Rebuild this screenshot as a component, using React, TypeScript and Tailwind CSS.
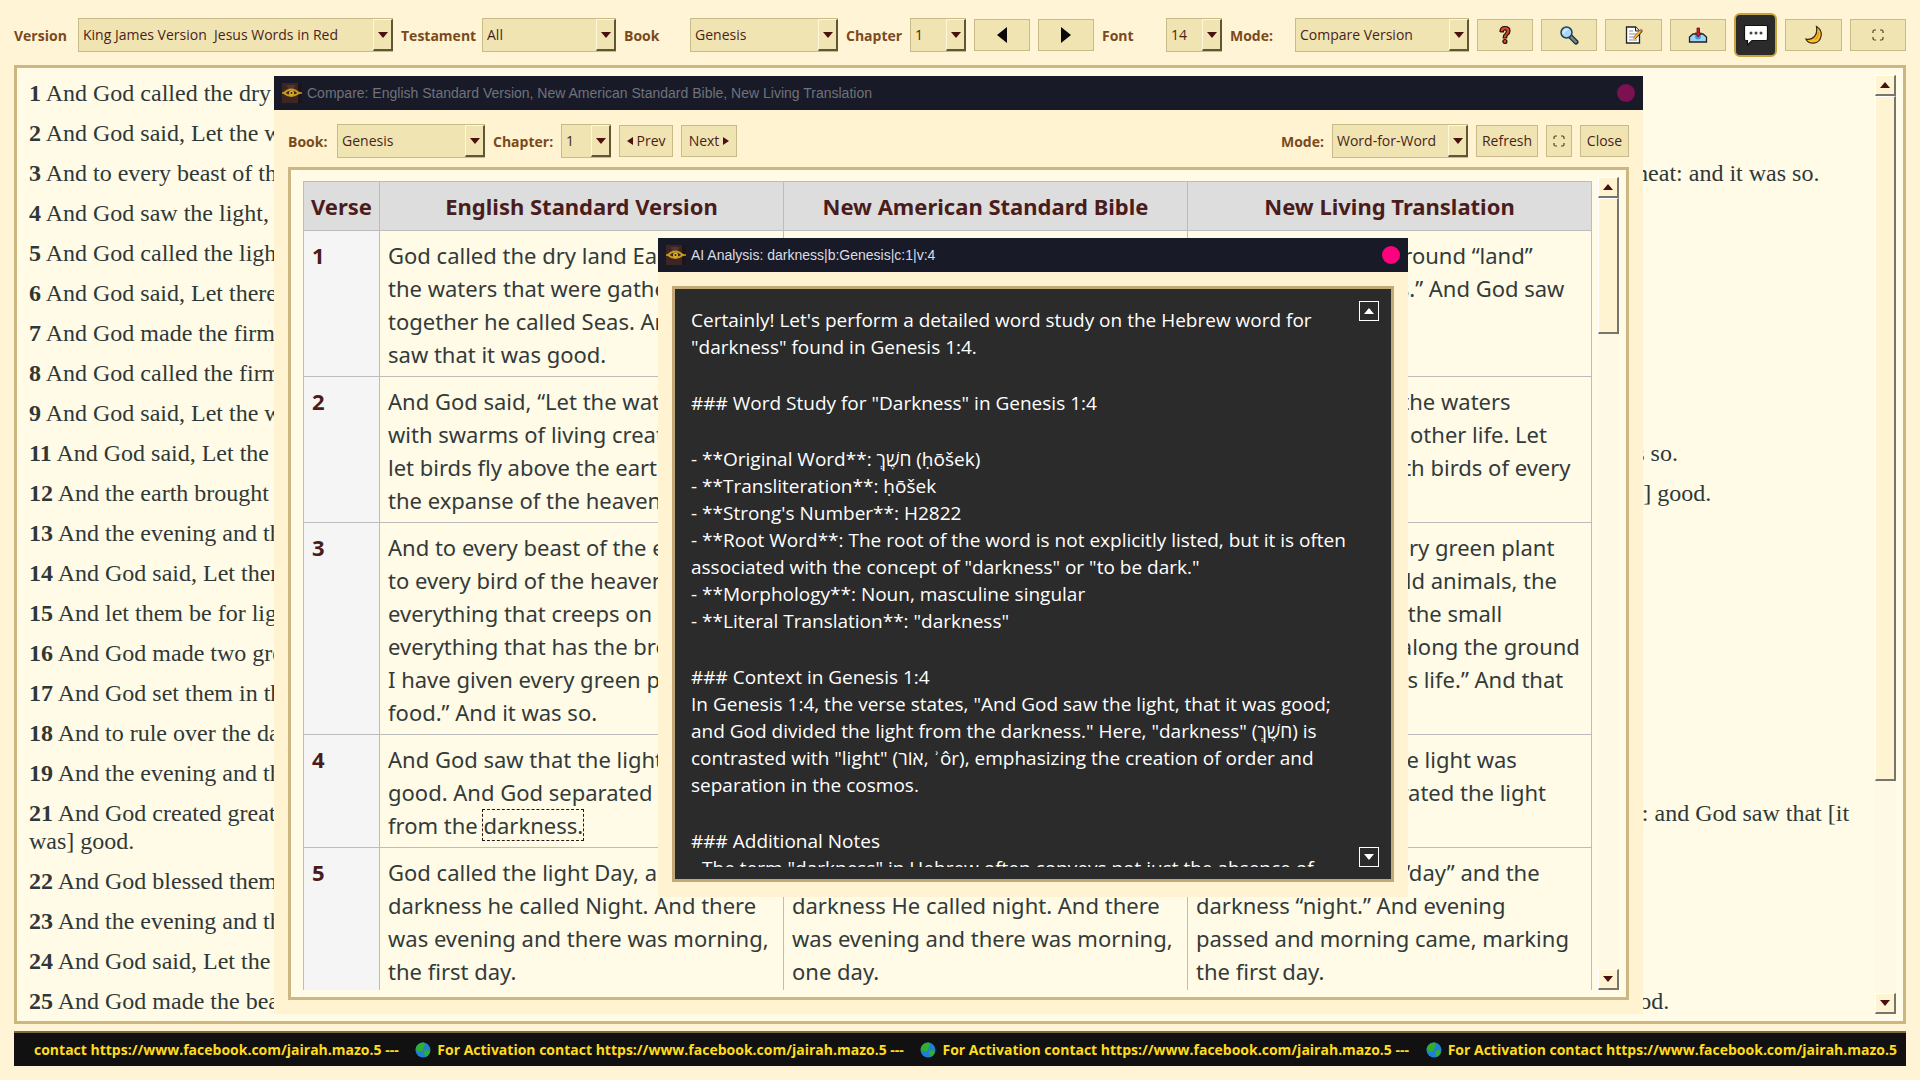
import React from "react";
import clsx from "clsx";

const verses = [
  [1, "And God called the dry [land] Earth; and the gathering together of the waters called he Seas: and God saw that [it was] good."],
  [2, "And God said, Let the waters bring forth abundantly the moving creature that hath life, and fowl [that] may fly above the earth in the open firmament."],
  [3, "And to every beast of the earth, and to every fowl of the air, and to every thing that creepeth upon the earth, wherein there is life, [I have given] every green herb for meat: and it was so."],
  [4, "And God saw the light, that [it was] good: and God divided the light from the darkness."],
  [5, "And God called the light Day, and the darkness he called Night. And the evening and the morning were the first day."],
  [6, "And God said, Let there be a firmament in the midst of the waters, and let it divide the waters from the waters."],
  [7, "And God made the firmament, and divided the waters which [were] under the firmament from the waters which [were] above the firmament: and it was so."],
  [8, "And God called the firmament Heaven. And the evening and the morning were the second day."],
  [9, "And God said, Let the waters under the heaven be gathered together unto one place, and let the dry [land] appear: and it was so."],
  [11, "And God said, Let the earth bring forth grass, the herb yielding seed, [and] the fruit tree yielding fruit after his kind, whose seed is in itself, upon the earth: and it was so."],
  [12, "And the earth brought forth grass, [and] herb yielding seed after his kind, and the tree yielding fruit, whose seed was in itself, after his kind: and God saw that [it was] good."],
  [13, "And the evening and the morning were the third day."],
  [14, "And God said, Let there be lights in the firmament of the heaven to divide the day from the night; and let them be for signs, and for seasons."],
  [15, "And let them be for lights in the firmament of the heaven to give light upon the earth: and it was so."],
  [16, "And God made two great lights; the greater light to rule the day, and the lesser light to rule the night: [he made] the stars also."],
  [17, "And God set them in the firmament of the heaven to give light upon the earth,"],
  [18, "And to rule over the day and over the night, and to divide the light from the darkness: and God saw that [it was] good."],
  [19, "And the evening and the morning were the fourth day."],
  [21, "And God created great whales and every living creature that moveth which the waters brought forth abundantly after their kind, and every winged fowl after his kind: and God saw that [it was] good."],
  [22, "And God blessed them, saying, Be fruitful, and multiply, and fill the waters in the seas, and let fowl multiply in the earth."],
  [23, "And the evening and the morning were the fifth day."],
  [24, "And God said, Let the earth bring forth the living creature after his kind, cattle, and creeping thing, and beast of the earth: and it was so."],
  [25, "And God made the beast of the earth after his kind and cattle after their kind and every thing that creepeth upon the earth after his kind; and God saw that [it was] good."],
] as const;

const compareRows: React.ReactNode[][] = [
  [
    "God called the dry land Earth, and\nthe waters that were gathered\ntogether he called Seas. And God\nsaw that it was good.",
    "And God called the dry land earth,\nand the gathering of the waters He\ncalled seas; and God saw that it\nwas good.",
    "God called the dry ground “land”\nand the waters “seas.” And God saw\nthat it was good.",
  ],
  [
    "And God said, “Let the waters swarm\nwith swarms of living creatures, and\nlet birds fly above the earth across\nthe expanse of the heavens.”",
    "Then God said, “Let the waters teem\nwith swarms of living creatures, and\nlet birds fly above the earth in the\nopen expanse of the heavens.”",
    "Then God said, “Let the waters\nswarm with fish and other life. Let\nthe skies be filled with birds of every\nkind.”",
  ],
  [
    "And to every beast of the earth and\nto every bird of the heavens and to\neverything that creeps on the earth,\neverything that has the breath of life,\nI have given every green plant for\nfood.” And it was so.",
    "and to every beast of the earth and\nto every bird of the sky and to\neverything that moves on the earth\nwhich has life, I have given every\ngreen plant for food”; and it was so.",
    "And I have given every green plant\nas food for all the wild animals, the\nbirds in the sky, and the small\nanimals that scurry along the ground\n—everything that has life.” And that\nis what happened.",
  ],
  [
    <>
      {"And God saw that the light was\ngood. And God separated the light\nfrom the "}
      <span className="outline-1 outline-dashed outline-[#2b1512]">darkness.</span>
    </>,
    "God saw that the light was good;\nand God separated the light from\nthe darkness.",
    "And God saw that the light was\ngood. Then he separated the light\nfrom the darkness.",
  ],
  [
    "God called the light Day, and the\ndarkness he called Night. And there\nwas evening and there was morning,\nthe first day.",
    "God called the light day, and the\ndarkness He called night. And there\nwas evening and there was morning,\none day.",
    "God called the light “day” and the\ndarkness “night.” And evening\npassed and morning came, marking\nthe first day.",
  ],
];

const analysis = [
  "Certainly! Let's perform a detailed word study on the Hebrew word for\n\"darkness\" found in Genesis 1:4.",
  "### Word Study for \"Darkness\" in Genesis 1:4",
  "- **Original Word**: חֹשֶׁךְ (ḥōšek)\n- **Transliteration**: ḥōšek\n- **Strong's Number**: H2822\n- **Root Word**: The root of the word is not explicitly listed, but it is often\nassociated with the concept of \"darkness\" or \"to be dark.\"\n- **Morphology**: Noun, masculine singular\n- **Literal Translation**: \"darkness\"",
  "### Context in Genesis 1:4\nIn Genesis 1:4, the verse states, \"And God saw the light, that it was good;\nand God divided the light from the darkness.\" Here, \"darkness\" (חֹשֶׁךְ) is\ncontrasted with \"light\" (אוֹר, ʾôr), emphasizing the creation of order and\nseparation in the cosmos.",
  "### Additional Notes\n- The term \"darkness\" in Hebrew often conveys not just the absence of",
];

function Select({ id, value, className }: { id: string; value: string; className?: string }) {
  return (
    <div className={clsx("relative h-[34px]", className)}>
      <select
        id={id}
        className="h-full w-full appearance-none border border-[#c9ba8a] bg-[#f0e4b2] pl-1 text-sm text-[#4a1f1a] outline-none"
      >
        <option>{value}</option>
      </select>
      <span className="pointer-events-none absolute inset-y-px right-0 flex w-5 items-center justify-center border-t border-r-2 border-b-2 border-l border-t-[#fff8dc] border-r-[#5f5634] border-b-[#5f5634] border-l-[#fff8dc]">
        <Triangle className="h-1.5 w-2.5 text-[#4a1010]" />
      </span>
    </div>
  );
}

function Triangle({ up, className }: { up?: boolean; className?: string }) {
  return (
    <svg viewBox="0 0 10 6" fill="currentColor" className={className}>
      <path d={up ? "M5 0l5 6H0z" : "M0 0h10L5 6z"} />
    </svg>
  );
}

function Label({ htmlFor, children, className }: { htmlFor: string; children: React.ReactNode; className?: string }) {
  return (
    <label htmlFor={htmlFor} className={clsx("shrink-0 pt-0.5 text-sm font-bold text-[#7a4a1c]", className)}>
      {children}
    </label>
  );
}

function Button({ label, className, children }: { label?: string; className?: string; children: React.ReactNode }) {
  return (
    <button
      aria-label={label}
      className={clsx(
        "flex h-8 shrink-0 items-center justify-center gap-1 border border-[#c9ba8a] bg-[#f0e4b2] text-sm text-[#4a1f1a]",
        className
      )}
    >
      {children}
    </button>
  );
}

function ScrollBar({ thumb, className }: { thumb: string; className?: string }) {
  const face =
    "border-t border-l border-r-2 border-b-2 border-t-white border-l-white border-r-[#77756c] border-b-[#77756c] bg-[#fef4d2]";
  return (
    <div className={clsx("flex w-[21px] shrink-0 flex-col bg-[#fdf9e4]", className)}>
      <button aria-label="Scroll up" className={clsx("flex h-[21px] items-center justify-center", face)}>
        <Triangle up className="h-1.5 w-2.5 text-[#4a1010]" />
      </button>
      <div className="min-h-0 flex-1">
        <div className={clsx(thumb, face)} />
      </div>
      <button aria-label="Scroll down" className={clsx("flex h-[21px] items-center justify-center", face)}>
        <Triangle className="h-1.5 w-2.5 text-[#4a1010]" />
      </button>
    </div>
  );
}

function AppIcon() {
  return (
    <svg viewBox="0 0 20 20" className="size-5 shrink-0">
      <rect x="0" y="0" width="19" height="20" fill="#3d2521" />
      <rect x="16" y="0" width="4" height="20" fill="#1c1416" />
      <path d="M5 3h8M6 5h6" stroke="#6d4a35" strokeWidth="1" />
      <path d="M2 10q7-7 15 0q-8 6-15 0z" fill="none" stroke="#c99a1e" strokeWidth="2" />
      <circle cx="9.5" cy="10" r="2.5" fill="#e0b42c" />
      <circle cx="9.5" cy="10" r="1" fill="#2a1a12" />
      <path d="M0 10h2M17 10h3" stroke="#c99a1e" strokeWidth="1.5" />
    </svg>
  );
}

function TitleBar({ title, dimmed }: { title: string; dimmed?: boolean }) {
  return (
    <div className="flex h-[34px] shrink-0 items-center gap-[5px] bg-[#181a28] px-2 font-['Liberation_Sans',sans-serif]">
      <AppIcon />
      <span className={clsx("text-sm whitespace-nowrap", dimmed ? "text-[#70727c]" : "text-[#dcdce4]")}>
        {title}
      </span>
      <button
        aria-label="Close window"
        className={clsx("ml-auto size-[18px] shrink-0 rounded-full", dimmed ? "bg-[#7c1050]" : "bg-[#ff0080]")}
      />
    </div>
  );
}

function ExpandIcon() {
  return (
    <svg viewBox="0 0 12 12" className="size-3" fill="none" stroke="#5a3a20" strokeWidth="1.2">
      <path d="M1 4V2.500Q1 1 2.500 1H4M8 1h1.500Q11 1 11 2.500V4M11 8v1.500Q11 11 9.500 11H8M4 11H2.500Q1 11 1 9.500V8" />
    </svg>
  );
}

function HelpIcon() {
  return (
    <svg viewBox="0 0 18 20" className="h-5 w-[18px]" stroke="#1c0f0c" strokeWidth="1.200" fill="#dc4426">
      <path d="M4 6.500Q4 1.500 9 1.500T14 6Q14 8.500 11.500 10.200Q10.600 11 10.600 13H7.200Q7 9.800 9.200 8.400Q10.600 7.400 10.400 6Q10.200 4.800 9 4.800Q7.500 4.800 7.400 6.800Q5.500 7.200 4 6.500z" />
      <circle cx="8.900" cy="16.500" r="2" />
    </svg>
  );
}

function SearchIcon() {
  return (
    <svg viewBox="0 0 20 20" className="size-5">
      <path d="M11.500 11.500l5.500 5.500" stroke="#1e2a30" strokeWidth="5" strokeLinecap="round" />
      <path d="M12 12l4.800 4.800" stroke="#6c8790" strokeWidth="2.600" strokeLinecap="round" />
      <circle cx="7.500" cy="7.500" r="5.500" fill="#a9d6fb" stroke="#27404c" strokeWidth="1.500" />
      <path d="M4.500 8.500Q5 5 8.500 4.500" stroke="#e2f3ff" strokeWidth="1.500" fill="none" />
    </svg>
  );
}

function NoteIcon() {
  return (
    <svg viewBox="0 0 20 20" className="size-5">
      <path d="M2.500 2h9l4 4v12h-13z" fill="#fff" stroke="#222" strokeWidth="1.300" />
      <path d="M11.500 2v4h4" fill="#ddd" stroke="#222" strokeWidth="1" />
      <path d="M5 6h4M5 9h8M5 12h6M5 15h8" stroke="#8a8f96" strokeWidth="1.200" />
      <path d="M11 12.500l6-6.500" stroke="#222" strokeWidth="3" strokeLinecap="round" />
      <path d="M9.500 14l7-8" stroke="#f3b53a" strokeWidth="2" />
      <circle cx="17.200" cy="5.200" r="1.200" fill="#d86a5c" />
    </svg>
  );
}

function InboxIcon() {
  return (
    <svg viewBox="0 0 20 20" className="size-5">
      <path d="M1.500 12L5 9h10l3.500 3v5h-17z" fill="#9fd4f7" stroke="#1c2226" strokeWidth="1.300" />
      <path d="M7 12q.6 2.600 3 2.600t3-2.600L12.500 9.500h-5z" fill="#4a97d8" />
      <path d="M9 3h2.500v5h2L10.200 12 7 8h2z" fill="#c8202c" stroke="#4c1014" strokeWidth=".8" />
    </svg>
  );
}

function ChatIcon() {
  return (
    <svg viewBox="0 0 26 22" className="h-[22px] w-[26px]">
      <path
        d="M3 1.500h20q1.500 0 1.500 1.500v12q0 1.500-1.500 1.500H9L4.500 21v-4.500H3q-1.500 0-1.500-1.500V3q0-1.500 1.500-1.500z"
        fill="#fff"
        stroke="#111"
        strokeWidth="1.200"
      />
      <circle cx="8" cy="9" r="1.500" fill="#444" />
      <circle cx="13" cy="9" r="1.500" fill="#444" />
      <circle cx="18" cy="9" r="1.500" fill="#444" />
    </svg>
  );
}

function MoonIcon() {
  return (
    <svg viewBox="0 0 20 20" className="size-5">
      <path
        d="M12.500 1.500Q18 5 17.200 10.500Q16.200 17.500 9.500 18.200Q4.500 18.500 2 14.200Q7.500 15 10.500 11.500T12.500 1.500z"
        fill="#fbbd2c"
        stroke="#3a2a10"
        strokeWidth="1.200"
      />
      <path d="M14 7q1 5-3 7.500" stroke="#e09a1c" strokeWidth="1.500" fill="none" />
    </svg>
  );
}

function Globe() {
  return (
    <svg viewBox="0 0 16 16" className="mr-1.5 inline-block size-4 align-[-3px]">
      <circle cx="8" cy="8" r="7.500" fill="#1e7fd6" />
      <path d="M2 3.500Q5 0 9 .6Q11 3 8.500 5.500Q9 8 6.500 9.500Q3 10.500 .6 7.500Q.8 5 2 3.500z" fill="#2fae2f" />
      <path d="M9.500 8.500l4-.5 1.500 2q-1.500 4-4 5Q8.500 13 9.500 8.500z" fill="#2fae2f" />
    </svg>
  );
}

function CompareWindow() {
  return (
    <section className="absolute top-[76px] left-[274px] flex h-[938px] w-[1369px] flex-col bg-[#fff3d1]">
      <TitleBar dimmed title="Compare: English Standard Version, New American Standard Bible, New Living Translation" />
      <div className="flex min-h-0 flex-1 flex-col gap-[9px] px-3.5 pt-3.5 pb-3.5">
        <div className="flex items-center gap-2">
          <Label htmlFor="cmp-book" className="w-[41px]">Book:</Label>
          <Select id="cmp-book" value="Genesis" className="w-[148px]" />
          <Label htmlFor="cmp-chapter" className="w-[60px]">Chapter:</Label>
          <Select id="cmp-chapter" value="1" className="w-[50px]" />
          <Button className="w-[54px]">
            <svg viewBox="0 0 6 8" className="h-2 w-1.5" fill="#4a1010"><path d="M6 0v8L0 4z" /></svg>
            Prev
          </Button>
          <Button className="w-[56px]">
            Next
            <svg viewBox="0 0 6 8" className="h-2 w-1.5" fill="#4a1010"><path d="M0 0v8l6-4z" /></svg>
          </Button>
          <Label htmlFor="cmp-mode" className="ml-auto">Mode:</Label>
          <Select id="cmp-mode" value="Word-for-Word" className="w-[136px]" />
          <Button className="w-[62px]">Refresh</Button>
          <Button label="Full screen" className="w-[26px]"><ExpandIcon /></Button>
          <Button className="w-[49px]">Close</Button>
        </div>
        <div className="flex min-h-0 flex-1 border-3 border-[#cdb67f] bg-[#fffbe6] p-[7px]">
          <div className="min-w-0 flex-1 overflow-hidden pt-1 pr-1.5 pl-[5px]">
            <table className="w-full table-fixed border-collapse font-['Noto_Sans',sans-serif] text-[22px] leading-[33px]">
              <thead>
                <tr className="h-[49px] bg-[#dddddd] text-[#4a1c1c]">
                  <th className="w-[76px] border border-[#bcbcbc] p-0">Verse</th>
                  <th className="border border-[#bcbcbc] p-0">English Standard Version</th>
                  <th className="border border-[#bcbcbc] p-0">New American Standard Bible</th>
                  <th className="border border-[#bcbcbc] p-0">New Living Translation</th>
                </tr>
              </thead>
              <tbody>
                {compareRows.map((cells, i) => (
                  <tr key={i} className="align-top text-[#333a3a]">
                    <th className="border border-[#bcbcbc] bg-[#f5f5f5] px-2 pt-2 pb-[5px] text-left text-[#4a1c1c]">
                      {i + 1}
                    </th>
                    {cells.map((cell, j) => (
                      <td key={j} className="border border-[#bcbcbc] px-2 pt-2 pb-[5px] whitespace-pre">
                        {cell}
                      </td>
                    ))}
                  </tr>
                ))}
              </tbody>
            </table>
          </div>
          <ScrollBar thumb="h-[136px]" />
        </div>
      </div>
    </section>
  );
}

function AnalysisWindow() {
  return (
    <section className="absolute top-[238px] left-[658px] flex h-[659px] w-[750px] flex-col bg-[#fff3d1]">
      <TitleBar title="AI Analysis: darkness|b:Genesis|c:1|v:4" />
      <div className="flex min-h-0 flex-1 px-3.5 pt-3.5 pb-[15px]">
        <div className="flex min-h-0 flex-1 border-3 border-[#c4a978] bg-[#2b2b2b] p-3">
          <div className="flex min-w-0 flex-1 flex-col gap-[29px] overflow-hidden pt-1.5 pl-1 text-[19px] leading-[27px] text-white">
            {analysis.map((block) => (
              <p key={block} className="whitespace-pre">{block}</p>
            ))}
          </div>
          <div className="flex w-5 shrink-0 flex-col justify-between">
            <button aria-label="Scroll up" className="flex h-5 items-center justify-center border border-white">
              <Triangle up className="h-1.5 w-2.5 text-white" />
            </button>
            <button aria-label="Scroll down" className="flex h-5 items-center justify-center border border-white">
              <Triangle className="h-1.5 w-2.5 text-white" />
            </button>
          </div>
        </div>
      </div>
    </section>
  );
}

export default function App() {
  const address = "contact https://www.facebook.com/jairah.mazo.5";
  return (
    <div className="relative flex h-screen flex-col overflow-hidden bg-[#fff4d6] px-3.5 pt-[13px] pb-3.5 font-['Open_Sans',sans-serif]">
      <header className="mb-2 flex h-11 shrink-0 items-center gap-2">
        <Label htmlFor="version" className="w-14">Version</Label>
        <Select id="version" value={"King James Version\u00a0 Jesus Words in Red"} className="flex-1" />
        <Label htmlFor="testament" className="w-[73px]">Testament</Label>
        <Select id="testament" value="All" className="w-[134px]" />
        <Label htmlFor="book" className="w-[58px]">Book</Label>
        <Select id="book" value="Genesis" className="w-[148px]" />
        <Label htmlFor="chapter" className="w-14">Chapter</Label>
        <Select id="chapter" value="1" className="w-14" />
        <Button label="Previous chapter" className="w-14">
          <svg viewBox="0 0 10 16" className="h-4 w-2.5" fill="#0c0805"><path d="M10 0v16L0 8z" /></svg>
        </Button>
        <Button label="Next chapter" className="w-14">
          <svg viewBox="0 0 10 16" className="h-4 w-2.5" fill="#0c0805"><path d="M0 0v16l10-8z" /></svg>
        </Button>
        <Label htmlFor="font" className="w-14">Font</Label>
        <Select id="font" value="14" className="w-14" />
        <Label htmlFor="mode" className="w-[57px]">Mode:</Label>
        <Select id="mode" value="Compare Version" className="w-[174px]" />
        <Button label="Help" className="w-14"><HelpIcon /></Button>
        <Button label="Search" className="w-14"><SearchIcon /></Button>
        <Button label="Notes" className="w-[57px]"><NoteIcon /></Button>
        <Button label="Import" className="w-14"><InboxIcon /></Button>
        <button
          aria-label="Chat"
          className="flex h-11 w-[43px] shrink-0 items-center justify-center rounded-md border-2 border-[#c9a23a] bg-[#2b2b2b]"
        >
          <ChatIcon />
        </button>
        <Button label="Dark mode" className="w-[57px]"><MoonIcon /></Button>
        <Button label="Full screen" className="w-14"><ExpandIcon /></Button>
      </header>

      <main className="flex min-h-0 flex-1 border-3 border-[#cdb67f] bg-[#fffbe6] p-[7px]">
        <div className="min-w-0 flex-1 space-y-3 overflow-hidden pt-1 pr-4 pl-[5px] font-['Liberation_Serif',serif] text-2xl leading-7 text-[#2f3838]">
          {verses.map(([n, text]) => (
            <p key={n}>
              <b>{n}</b> {text}
            </p>
          ))}
        </div>
        <ScrollBar thumb="h-[685px]" />
      </main>

      <footer className="mt-[7px] flex h-[35px] shrink-0 items-center justify-between overflow-hidden border-t-2 border-[#7d6c3c] bg-[#111111] pr-[9px] pl-5 text-sm font-bold whitespace-nowrap text-[#ffdc1c]">
        <span>{address} ---</span>
        <span><Globe />For Activation {address} ---</span>
        <span><Globe />For Activation {address} ---</span>
        <span><Globe />For Activation {address}</span>
      </footer>

      <CompareWindow />
      <AnalysisWindow />
    </div>
  );
}
